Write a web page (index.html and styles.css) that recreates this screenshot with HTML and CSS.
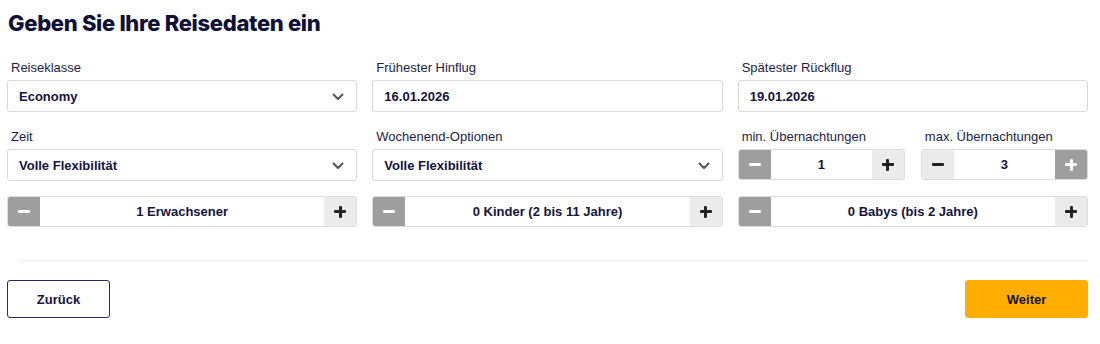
FILE: index.html
```html
<!DOCTYPE html>
<html lang="de">
<head>
<meta charset="utf-8">
<link rel="stylesheet" href="styles.css">
</head>
<body>
<div class="page">
  <h1 class="title">Geben Sie Ihre Reisedaten ein</h1>
  <div class="grid">
    <div class="group first">
      <div class="label">Reiseklasse</div>
      <div class="field select"><span>Economy</span><svg class="chev" width="12" height="8" viewBox="0 0 12 8"><path d="M1.5 1.5 L6 6 L10.5 1.5" fill="none" stroke="#555" stroke-width="2" stroke-linecap="round" stroke-linejoin="round"/></svg></div>
    </div>
    <div class="group first">
      <div class="label">Frühester Hinflug</div>
      <div class="field date"><span>16.01.2026</span></div>
    </div>
    <div class="group first">
      <div class="label">Spätester Rückflug</div>
      <div class="field date"><span>19.01.2026</span></div>
    </div>

    <div class="group">
      <div class="label">Zeit</div>
      <div class="field select"><span>Volle Flexibilität</span><svg class="chev" width="12" height="8" viewBox="0 0 12 8"><path d="M1.5 1.5 L6 6 L10.5 1.5" fill="none" stroke="#555" stroke-width="2" stroke-linecap="round" stroke-linejoin="round"/></svg></div>
    </div>
    <div class="group">
      <div class="label">Wochenend-Optionen</div>
      <div class="field select"><span>Volle Flexibilität</span><svg class="chev" width="12" height="8" viewBox="0 0 12 8"><path d="M1.5 1.5 L6 6 L10.5 1.5" fill="none" stroke="#555" stroke-width="2" stroke-linecap="round" stroke-linejoin="round"/></svg></div>
    </div>
    <div class="split">
      <div class="group">
        <div class="label">min. Übernachtungen</div>
        <div class="stepper">
          <span class="btn off"><i class="minus"></i></span>
          <span class="val">1</span>
          <span class="btn on"><i class="plus"></i></span>
        </div>
      </div>
      <div class="group">
        <div class="label">max. Übernachtungen</div>
        <div class="stepper">
          <span class="btn on"><i class="minus"></i></span>
          <span class="val">3</span>
          <span class="btn off"><i class="plus"></i></span>
        </div>
      </div>
    </div>

    <div class="stepper">
      <span class="btn off"><i class="minus"></i></span>
      <span class="val">1 Erwachsener</span>
      <span class="btn on"><i class="plus"></i></span>
    </div>
    <div class="stepper">
      <span class="btn off"><i class="minus"></i></span>
      <span class="val">0 Kinder (2 bis 11 Jahre)</span>
      <span class="btn on"><i class="plus"></i></span>
    </div>
    <div class="stepper">
      <span class="btn off"><i class="minus"></i></span>
      <span class="val">0 Babys (bis 2 Jahre)</span>
      <span class="btn on"><i class="plus"></i></span>
    </div>
  </div>
  <div class="divider"></div>
  <div class="actions">
    <button class="back">Zurück</button>
    <button class="next">Weiter</button>
  </div>
</div>
</body>
</html>
```

FILE: styles.css
```css
* { box-sizing: border-box; }
html, body { margin: 0; padding: 0; background: #fff; }
body {
  font-family: "Liberation Sans", Arial, sans-serif;
  color: #14143c;
}
.page {
  width: 1100px;
  padding: 0 12px 0 7px;
}
.title {
  margin: 0;
  padding: 9px 0 0 1px;
  font-family: Inter, "Liberation Sans", sans-serif;
  font-weight: 800;
  font-size: 22px;
  line-height: 28px;
  letter-spacing: -0.32px;
  color: #0f0f38;
}
.grid {
  display: grid;
  grid-template-columns: repeat(3, 1fr);
  column-gap: 15px;
  row-gap: 15px;
  margin-top: 23px;
}
.group.first { margin-bottom: 2px; }
.split {
  display: grid;
  grid-template-columns: 1fr 1fr;
  column-gap: 16px;
}
.label {
  font-size: 13px;
  line-height: 16px;
  padding-left: 4px;
  margin-bottom: 4px;
  color: #1d1d45;
}
.field {
  height: 32px;
  border: 1px solid #d9d9d9;
  border-radius: 3px;
  display: flex;
  align-items: center;
  justify-content: space-between;
  padding: 0 12px 0 11px;
  font-weight: bold;
  font-size: 13px;
  color: #14143c;
}
.chev { margin-top: 1px; }
.stepper {
  height: 31px;
  border: 1px solid #dcdcdc;
  border-radius: 3px;
  display: flex;
  align-items: stretch;
  overflow: hidden;
  font-weight: bold;
  font-size: 13px;
}
.stepper .val {
  flex: 1;
  display: flex;
  align-items: center;
  justify-content: center;
  color: #14143c;
}
.btn {
  width: 32px;
  display: flex;
  align-items: center;
  justify-content: center;
}
.btn.off { background: #9e9e9e; }
.btn.on { background: #ebebeb; }
.minus, .plus { position: relative; display: block; width: 12px; height: 12px; }
.minus::before, .plus::before, .plus::after {
  content: "";
  position: absolute;
}
.minus::before, .plus::before {
  left: 0; top: 4.5px; width: 12px; height: 3px; border-radius: 1px;
}
.plus::after {
  left: 4.5px; top: 0; width: 3px; height: 12px; border-radius: 1px;
}
.btn.off i::before, .btn.off i::after { background: #fff; }
.btn.on i::before, .btn.on i::after { background: #222; }
.divider {
  height: 1px;
  background: #ededed;
  margin: 33px 0 0 13px;
}
.actions {
  display: flex;
  justify-content: space-between;
  margin-top: 19px;
}
.actions button {
  height: 38px;
  border-radius: 3px;
  font-family: "Liberation Sans", Arial, sans-serif;
  font-weight: bold;
  font-size: 13px;
  color: #14143c;
  cursor: pointer;
}
.back {
  width: 103px;
  background: #fff;
  border: 1px solid #2b2b5c;
}
.next {
  width: 123px;
  background: #ffad00;
  border: 1px solid #ffad00;
}
```
